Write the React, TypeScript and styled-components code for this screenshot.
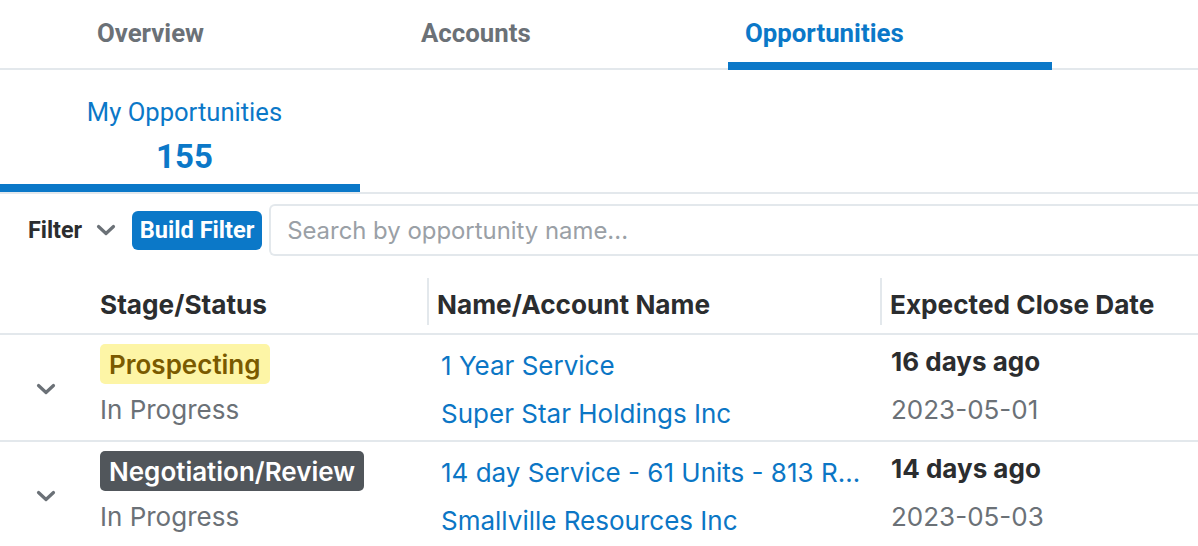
import React from "react";
import styled, { createGlobalStyle } from "styled-components";

const Global = createGlobalStyle`
  html, body { margin: 0; padding: 0; background: #fff; }
  body { font-family: Inter, "Noto Sans", sans-serif; overflow: hidden; }
  * { box-sizing: border-box; }
`;

const BLUE = "#0b78c8";
const LINE = "#e3e8ec";
const FS = "26px";

const Page = styled.div`
  width: 1198px;
  height: 546px;
  overflow: hidden;
  background: #fff;
`;

const TabBar = styled.nav`
  display: flex;
  height: 70px;
  padding-left: 80px;
  box-shadow: inset 0 -2px 0 ${LINE};
`;

const Tab = styled.div<{ $active?: boolean }>`
  width: 324px;
  height: 70px;
  padding: 16px 0 0 17px;
  font-family: Roboto, "Liberation Sans", sans-serif;
  font-weight: 700;
  font-size: 25.8px;
  line-height: 34px;
  color: ${(p) => (p.$active ? BLUE : "#6b7177")};
  box-shadow: ${(p) => (p.$active ? `inset 0 -8px 0 ${BLUE}` : "none")};
`;

const SubTabBar = styled.div`
  display: flex;
  border-bottom: 2px solid ${LINE};
`;

const SubTab = styled.div`
  width: 360px;
  height: 122px;
  padding: 24px 0 0 9px;
  text-align: center;
  font-family: Roboto, "Liberation Sans", sans-serif;
  color: ${BLUE};
  box-shadow: inset 0 -8px 0 ${BLUE};
`;

const SubTabLabel = styled.div`
  font-size: 25.6px;
  line-height: 36px;
`;

const SubTabCount = styled.div`
  margin-top: 5px;
  font-size: 33px;
  font-weight: 700;
  line-height: 44px;
`;

const FilterRow = styled.div`
  display: flex;
  align-items: center;
  height: 72px;
  padding: 10px 0 10px 28px;
`;

const FilterLabel = styled.div`
  display: flex;
  align-items: center;
  gap: 14px;
  font-family: Roboto, "Liberation Sans", sans-serif;
  font-weight: 700;
  font-size: 23.3px;
  color: #2b2d2f;
  margin-right: 16px;
`;

const BuildButton = styled.button`
  height: 39px;
  width: 130px;
  border: none;
  border-radius: 6px;
  background: ${BLUE};
  color: #fff;
  font-family: Roboto, "Liberation Sans", sans-serif;
  font-weight: 700;
  font-size: 23.6px;
  padding: 0;
  margin-right: 7px;
`;

const Search = styled.div`
  flex: 1;
  height: 52px;
  border: 2px solid ${LINE};
  border-right: none;
  border-radius: 6px 0 0 6px;
  display: flex;
  align-items: center;
  padding-left: 16px;
  font-size: 23.9px;
  color: #9aa0a6;
`;

const Grid = styled.div`
  display: grid;
  grid-template-columns: 90px 337px 453px 1fr;
`;

const HeaderRow = styled(Grid)`
  height: 69px;
  padding: 12px 0 8px;
  border-bottom: 2px solid ${LINE};
`;

const HeaderCell = styled.div<{ $divider?: boolean }>`
  height: 47px;
  display: flex;
  align-items: center;
  padding-top: 5px;
  padding-left: ${(p) => (p.$divider ? "8px" : "10px")};
  border-left: ${(p) => (p.$divider ? `2px solid ${LINE}` : "none")};
  font-weight: 700;
  font-size: 26.2px;
  color: #2b2d2f;
  white-space: nowrap;
`;

const Row = styled(Grid)`
  height: 107px;
  border-bottom: 2px solid ${LINE};
`;

const ChevronCell = styled.div`
  display: flex;
  align-items: center;
  justify-content: flex-end;
  padding-right: 34px;
  padding-top: 2px;
`;

const StageCell = styled.div`
  padding: 9px 0 0 10px;
`;

const Badge = styled.span<{ $tone: "yellow" | "dark" }>`
  display: inline-flex;
  align-items: center;
  height: 40px;
  padding: 0 9px;
  border-radius: 5px;
  font-weight: 600;
  font-size: ${FS};
  background: ${(p) => (p.$tone === "yellow" ? "#fdf5a6" : "#51565b")};
  color: ${(p) => (p.$tone === "yellow" ? "#7a5a00" : "#fff")};
`;

const Status = styled.div`
  margin-top: 8px;
  font-size: ${FS};
  line-height: 36px;
  color: #6b7177;
`;

const NameCell = styled.div`
  padding: 7px 18px 0 14px;
  min-width: 0;
`;

const LinkLine = styled.div`
  font-size: ${FS};
  line-height: 48px;
  color: #0b76c5;
  white-space: nowrap;
  overflow: hidden;
  text-overflow: ellipsis;
`;

const DateCell = styled.div`
  padding: 3px 0 0 11px;
`;

const Relative = styled.div`
  font-weight: 700;
  font-size: ${FS};
  line-height: 48px;
  color: #2b2d2f;
`;

const DateText = styled.div`
  font-size: ${FS};
  line-height: 48px;
  color: #6b7177;
`;

const Chevron = ({ color = "#6b7177", size = 20 }: { color?: string; size?: number }) => (
  <svg width={size} height={size * 0.6} viewBox="0 0 20 12" fill="none">
    <path d="M2.5 2.5 L10 9.5 L17.5 2.5" stroke={color} strokeWidth="3.2" strokeLinecap="round" strokeLinejoin="round" />
  </svg>
);

const rows = [
  {
    stage: "Prospecting",
    tone: "yellow" as const,
    status: "In Progress",
    name: "1 Year Service",
    account: "Super Star Holdings Inc",
    rel: "16 days ago",
    date: "2023-05-01",
  },
  {
    stage: "Negotiation/Review",
    tone: "dark" as const,
    status: "In Progress",
    name: "14 day Service - 61 Units - 813 Riverside Drive",
    account: "Smallville Resources Inc",
    rel: "14 days ago",
    date: "2023-05-03",
  },
];

export default function App() {
  return (
    <Page>
      <Global />
      <TabBar>
        <Tab>Overview</Tab>
        <Tab>Accounts</Tab>
        <Tab $active>Opportunities</Tab>
      </TabBar>
      <SubTabBar>
        <SubTab>
          <SubTabLabel>My Opportunities</SubTabLabel>
          <SubTabCount>155</SubTabCount>
        </SubTab>
      </SubTabBar>
      <FilterRow>
        <FilterLabel>
          Filter
          <Chevron size={20} />
        </FilterLabel>
        <BuildButton>Build Filter</BuildButton>
        <Search>Search by opportunity name...</Search>
      </FilterRow>
      <HeaderRow>
        <div />
        <HeaderCell>Stage/Status</HeaderCell>
        <HeaderCell $divider>Name/Account Name</HeaderCell>
        <HeaderCell $divider>Expected Close Date</HeaderCell>
      </HeaderRow>
      {rows.map((r) => (
        <Row key={r.name}>
          <ChevronCell>
            <Chevron />
          </ChevronCell>
          <StageCell>
            <Badge $tone={r.tone}>{r.stage}</Badge>
            <Status>{r.status}</Status>
          </StageCell>
          <NameCell>
            <LinkLine>{r.name}</LinkLine>
            <LinkLine>{r.account}</LinkLine>
          </NameCell>
          <DateCell>
            <Relative>{r.rel}</Relative>
            <DateText>{r.date}</DateText>
          </DateCell>
        </Row>
      ))}
    </Page>
  );
}
